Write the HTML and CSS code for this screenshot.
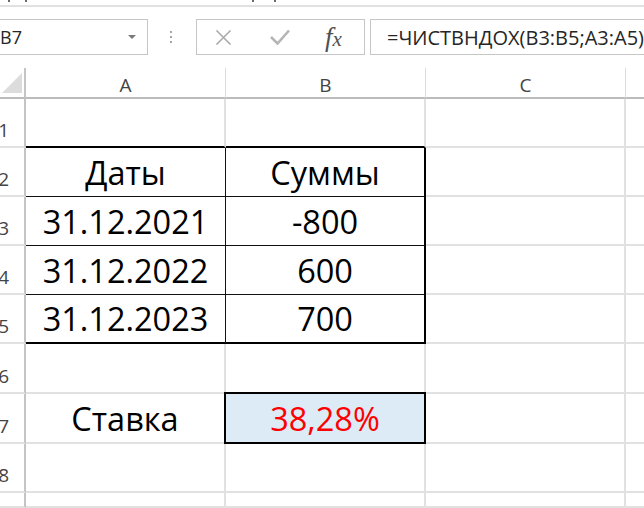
FILE: index.html
```html
<!DOCTYPE html>
<html lang="ru">
<head>
    <meta charset="UTF-8">
    <meta name="viewport" content="width=device-width, initial-scale=1.0">
    <title>ЧИСТВНДОХ</title>
    <link rel="stylesheet" href="styles.css">
</head>
<body>
    <div class="ribbon-edge">
        <span class="tick t1"></span>
        <span class="tick t2"></span>
        <span class="tick t3"></span>
        <span class="tick t4"></span>
    </div>

    <div class="formula-bar">
        <div class="name-box">
            <span>B7</span>
            <span class="caret"></span>
        </div>
        <div class="grip"><i></i><i></i><i></i></div>
        <div class="fx-box">
            <svg class="icon-cancel" width="17" height="15" viewBox="0 0 17 15">
                <path d="M1.5 0.5 L15.5 14.5 M15.5 0.5 L1.5 14.5" stroke="#ababab" stroke-width="1.6" fill="none"/>
            </svg>
            <svg class="icon-enter" width="20" height="16" viewBox="0 0 20 16">
                <path d="M1 8 L7.5 14.5 L19 1.5" stroke="#b5b5b5" stroke-width="2.6" fill="none"/>
            </svg>
            <span class="fx">f<span class="fx-x">x</span></span>
        </div>
        <div class="formula">=ЧИСТВНДОХ(B3:B5;A3:A5)</div>
    </div>

    <div class="sheet">
        <!-- header -->
        <div class="corner"><span class="corner-mark"></span></div>
        <div class="col-head">A</div>
        <div class="col-head">B</div>
        <div class="col-head">C</div>
        <div class="col-head last"></div>

        <!-- 1 -->
        <div class="row-head">1</div>
        <div class="c t-top"></div>
        <div class="c t-top"></div>
        <div class="c"></div>
        <div class="c last"></div>

        <!-- 2 -->
        <div class="row-head">2</div>
        <div class="c t-mid t-in-h">Даты</div>
        <div class="c t-right t-in-h">Суммы</div>
        <div class="c"></div>
        <div class="c last"></div>

        <!-- 3 -->
        <div class="row-head">3</div>
        <div class="c t-mid t-in-h">31.12.2021</div>
        <div class="c t-right t-in-h">-800</div>
        <div class="c"></div>
        <div class="c last"></div>

        <!-- 4 -->
        <div class="row-head">4</div>
        <div class="c t-mid t-in-h">31.12.2022</div>
        <div class="c t-right t-in-h">600</div>
        <div class="c"></div>
        <div class="c last"></div>

        <!-- 5 -->
        <div class="row-head">5</div>
        <div class="c t-mid t-bottom">31.12.2023</div>
        <div class="c t-right t-bottom">700</div>
        <div class="c"></div>
        <div class="c last"></div>

        <!-- 6 -->
        <div class="row-head">6</div>
        <div class="c"></div>
        <div class="c"></div>
        <div class="c"></div>
        <div class="c last"></div>

        <!-- 7 -->
        <div class="row-head">7</div>
        <div class="c">Ставка</div>
        <div class="c rate">38,28%</div>
        <div class="c"></div>
        <div class="c last"></div>

        <!-- 8 -->
        <div class="row-head">8</div>
        <div class="c"></div>
        <div class="c"></div>
        <div class="c"></div>
        <div class="c last"></div>

        <!-- top of the next row -->
        <div class="row-head"></div>
        <div class="c"></div>
        <div class="c"></div>
        <div class="c"></div>
        <div class="c last"></div>
    </div>
</body>
</html>
```

FILE: styles.css
```css
/* Sheet view */
body {
    margin: 0;
    font-family: "Open Sans", "Noto Sans", sans-serif;
    background-color: #fff;
    color: #000;
    width: 644px;
    height: 508px;
    overflow: hidden;
}

/* bottom edge of the ribbon */
.ribbon-edge {
    display: flex;
    height: 5px;
    border-bottom: 2px solid #e1e1e1;
}
.tick {
    width: 2px;
    height: 2px;
    background-color: #6a6a6a;
}
.t1 { margin-left: 8px; }
.t2 { margin-left: 15px; }
.t3 { margin-left: 225px; }
.t4 { margin-left: 20px; }

/* formula bar */
.formula-bar {
    display: flex;
    align-items: center;
    height: 36px;
    margin-top: 12px;
}
.name-box {
    width: 152px;
    height: 36px;
    margin-left: -4px;
    box-sizing: border-box;
    border: 1px solid #c6c6c6;
    display: flex;
    align-items: center;
    justify-content: space-between;
    padding: 0 11px 0 3px;
    font-size: 18px;
    color: #262626;
}
.caret {
    width: 0;
    height: 0;
    border-left: 4px solid transparent;
    border-right: 4px solid transparent;
    border-top: 4px solid #7a7a7a;
}
.grip {
    display: flex;
    flex-direction: column;
    gap: 3px;
    margin-left: 22px;
}
.grip i {
    width: 2px;
    height: 2px;
    background-color: #a6a6a6;
}
.fx-box {
    width: 169px;
    height: 36px;
    margin-left: 24px;
    box-sizing: border-box;
    border: 1px solid #c6c6c6;
    display: flex;
    align-items: center;
    padding-left: 18px;
}
.icon-enter {
    margin-left: 38px;
}
.fx {
    margin-left: 35px;
    font-family: "Liberation Serif", serif;
    font-style: italic;
    font-size: 27px;
    color: #505050;
    line-height: 1;
}
.fx-x {
    font-size: 21px;
}
.formula {
    flex: 1;
    height: 36px;
    margin-left: 5px;
    margin-right: -20px;
    box-sizing: border-box;
    border: 1px solid #c6c6c6;
    display: flex;
    align-items: center;
    padding-left: 16px;
    font-size: 20px;
    color: #262626;
    white-space: nowrap;
}

/* grid */
.sheet {
    display: grid;
    grid-template-columns: 26px 200px 200px 200px 1fr;
    grid-template-rows: 31px 49px 49px 49px 49px 49px 50px 50px 49px 15px;
    margin-top: 13px;
}
.sheet > div {
    box-sizing: border-box;
    display: flex;
    align-items: center;
    justify-content: center;
}
.corner {
    border-right: 2px solid #c4c4c4;
    border-bottom: 2px solid #bcbcbc;
    justify-content: flex-end !important;
    align-items: flex-end !important;
    padding: 0 2px 4px 0;
}
.corner-mark {
    width: 20px;
    height: 20px;
    background-color: #dcdcdc;
    clip-path: polygon(100% 0, 100% 100%, 0 100%);
}
.col-head {
    border-right: 1px solid #dcdcdc;
    border-bottom: 2px solid #bcbcbc;
    padding-top: 4px;
    font-size: 19px;
    color: #444;
}
.row-head {
    border-right: 2px solid #c4c4c4;
    border-bottom: 2px solid #e1e1e1;
    justify-content: flex-end !important;
    align-items: flex-end !important;
    padding: 0 15px 3px 0;
    font-size: 19px;
    color: #444;
}
.c {
    border-right: 2px solid #e1e1e1;
    border-bottom: 2px solid #e1e1e1;
    font-size: 32.5px;
    white-space: nowrap;
}
.last {
    border-right: none;
}

/* bordered range A2:B5 */
.t-top {
    border-bottom-color: #000;
}
.t-mid {
    border-right: 1px solid #111;
}
.t-right {
    border-right: 2px solid #000;
}
.t-in-h {
    border-bottom: 1px solid #111;
}
.t-bottom {
    border-bottom: 2px solid #000;
}

/* selected result cell */
.rate {
    margin: -2px 0 0 -2px;
    border: 2px solid #000;
    background-color: #ddebf7;
    color: #ff0000;
}
```
